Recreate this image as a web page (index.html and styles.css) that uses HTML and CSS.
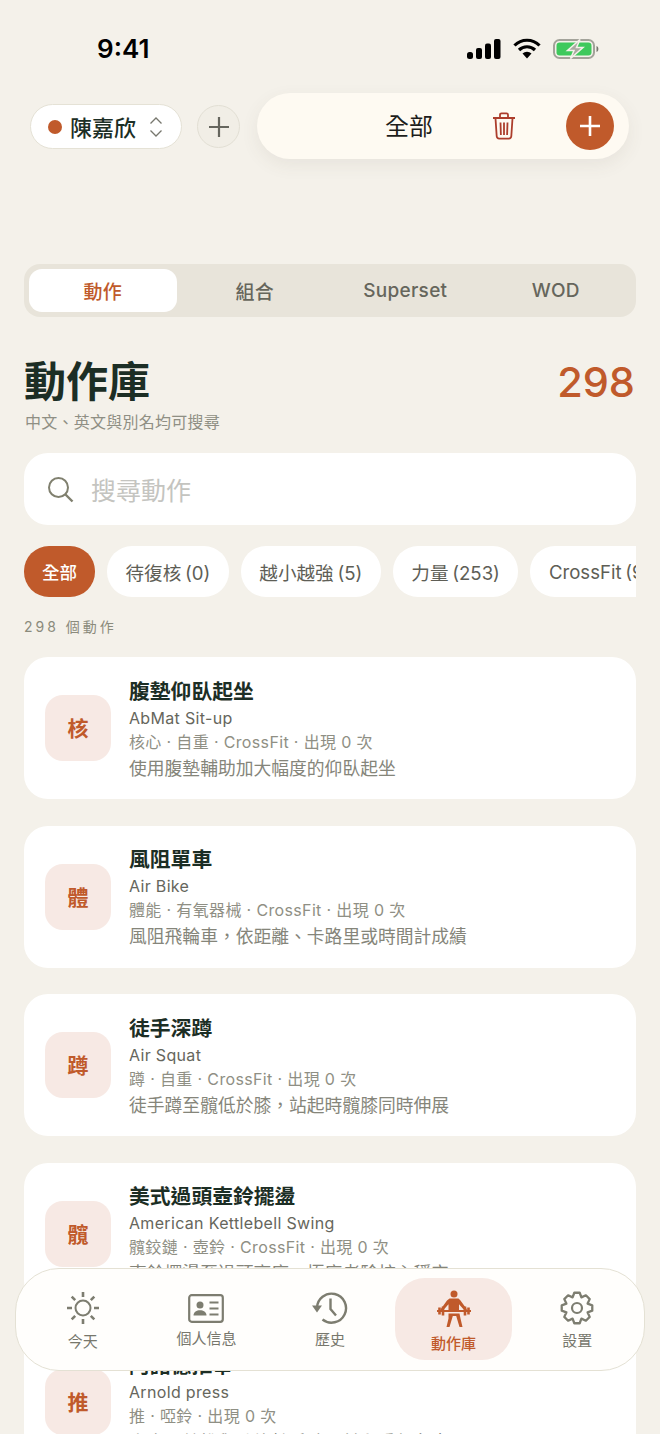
FILE: index.html
```html
<!DOCTYPE html>
<html lang="zh-Hant">
<head>
    <meta charset="UTF-8">
    <meta name="viewport" content="width=device-width, initial-scale=1.0">
    <title>動作庫</title>
    <link rel="stylesheet" href="styles.css">
</head>
<body>
    <div class="statusbar">
        <span class="time">9:41</span>
        <div class="status-icons">
            <svg width="34" height="20" viewBox="0 0 34 20"><rect x="0" y="13" width="6" height="7" rx="2.5" fill="#000"/><rect x="9" y="9" width="6" height="11" rx="2" fill="#000"/><rect x="18" y="4.500" width="6" height="15.500" rx="2" fill="#000"/><rect x="27" y="0" width="6.500" height="20" rx="2" fill="#000"/></svg>
            <svg width="28" height="21" viewBox="0 0 28 21"><path d="M1.500 7.500a17.500 17.500 0 0 1 25 0M6 12a11.500 11.500 0 0 1 16 0" fill="none" stroke="#000" stroke-width="3.200"/><path d="M9.500 15.500a6.500 6.500 0 0 1 9 0L14 20.500z" fill="#000"/></svg>
            <svg width="46" height="20" viewBox="0 0 46 20"><rect x="1" y="1" width="40" height="18" rx="5.500" fill="none" stroke="#a3a39a" stroke-width="2"/><rect x="3.500" y="3.500" width="35" height="13" rx="3.200" fill="#3ec95c"/><path d="M43.500 7c2.500.5 2.500 5.500 0 6z" fill="#77776f"/><path d="M27 .5 14.500 11.500h6.500L17.500 19.500 30 8.500h-6.500z" fill="#a9a9a1" stroke="#f4f1ea" stroke-width="1.500"/></svg>
        </div>
    </div>

    <div class="topbar">
        <div class="person">
            <span class="person-dot"></span>
            <span class="person-name">陳嘉欣</span>
            <svg width="14" height="22" viewBox="0 0 14 22"><path d="M1.500 7.500 7 2l5.500 5.500M1.500 14.500 7 20l5.500-5.500" fill="none" stroke="#77776e" stroke-width="1.300"/></svg>
        </div>
        <div class="add-person">
            <svg width="22" height="22" viewBox="0 0 22 22"><path d="M11 1v20M1 11h20" stroke="#66665e" stroke-width="2.200"/></svg>
        </div>
        <div class="action-pill">
            <span class="action-label">全部</span>
            <svg class="trash" width="24" height="28" viewBox="0 0 24 28"><path d="M1 6h22M8 5.500V2.800A1.500 1.500 0 0 1 9.500 1.300h5A1.500 1.500 0 0 1 16 2.800v2.700M3.500 6.500l1.200 17.800a2.500 2.500 0 0 0 2.500 2.300h9.600a2.500 2.500 0 0 0 2.500-2.300L20.500 6.500M8.500 10.500l.4 12.500M12 10.500V23M15.500 10.500 15.100 23" fill="none" stroke="#ac3d2c" stroke-width="1.800"/></svg>
            <div class="action-add">
                <svg width="22" height="22" viewBox="0 0 22 22"><path d="M11 1v20M1 11h20" stroke="#fff" stroke-width="2.600"/></svg>
            </div>
        </div>
    </div>

    <main class="content">
        <div class="tabs">
            <div class="tab tab-active">動作</div>
            <div class="tab">組合</div>
            <div class="tab">Superset</div>
            <div class="tab">WOD</div>
        </div>

        <div class="title-row">
            <h1>動作庫</h1>
            <span class="total">298</span>
        </div>
        <p class="subtitle">中文、英文與別名均可搜尋</p>

        <div class="search">
            <svg width="27" height="27" viewBox="0 0 27 27"><circle cx="11.500" cy="11.500" r="9.500" fill="none" stroke="#80806f" stroke-width="2"/><path d="m18.500 18.500 7 7" stroke="#80806f" stroke-width="2.400"/></svg>
            <span>搜尋動作</span>
        </div>

        <div class="chips">
            <div class="chip chip-active">全部</div>
            <div class="chip">待復核 (0)</div>
            <div class="chip">越小越強 (5)</div>
            <div class="chip">力量 (253)</div>
            <div class="chip">CrossFit (9)</div>
        </div>

        <div class="count">298 個動作</div>

        <div class="list">
            <div class="card">
                <div class="badge">核</div>
                <div class="info">
                    <div class="name">腹墊仰臥起坐</div>
                    <div class="name-en">AbMat Sit-up</div>
                    <div class="meta">核心 · 自重 · CrossFit · 出現 0 次</div>
                    <div class="desc">使用腹墊輔助加大幅度的仰臥起坐</div>
                </div>
            </div>
            <div class="card">
                <div class="badge">體</div>
                <div class="info">
                    <div class="name">風阻單車</div>
                    <div class="name-en">Air Bike</div>
                    <div class="meta">體能 · 有氧器械 · CrossFit · 出現 0 次</div>
                    <div class="desc">風阻飛輪車，依距離、卡路里或時間計成績</div>
                </div>
            </div>
            <div class="card">
                <div class="badge">蹲</div>
                <div class="info">
                    <div class="name">徒手深蹲</div>
                    <div class="name-en">Air Squat</div>
                    <div class="meta">蹲 · 自重 · CrossFit · 出現 0 次</div>
                    <div class="desc">徒手蹲至髖低於膝，站起時髖膝同時伸展</div>
                </div>
            </div>
            <div class="card">
                <div class="badge">髖</div>
                <div class="info">
                    <div class="name">美式過頭壺鈴擺盪</div>
                    <div class="name-en">American Kettlebell Swing</div>
                    <div class="meta">髖鉸鏈 · 壺鈴 · CrossFit · 出現 0 次</div>
                    <div class="desc">壺鈴擺盪至過頭高度，極度考驗核心穩定</div>
                </div>
            </div>
            <div class="card">
                <div class="badge">推</div>
                <div class="info">
                    <div class="name">阿諾德推舉</div>
                    <div class="name-en">Arnold press</div>
                    <div class="meta">推 · 啞鈴 · 出現 0 次</div>
                    <div class="desc">坐姿啞鈴推舉時旋轉手腕，兼顧肩部各束</div>
                </div>
            </div>
        </div>
    </main>

    <nav class="tabbar">
        <div class="nav-item">
            <svg width="36" height="36" viewBox="0 0 36 36"><circle cx="18" cy="18" r="7.500" fill="none" stroke="#7d7d70" stroke-width="2"/><path d="M18 2v5M18 29v5M2 18h5M29 18h5M6.700 6.700l3.500 3.500M25.800 25.800l3.500 3.500M6.700 29.300l3.500-3.500M25.800 10.200l3.500-3.500" stroke="#7d7d70" stroke-width="2.600"/></svg>
            <span>今天</span>
        </div>
        <div class="nav-item nav-item-id">
            <svg width="36" height="29" viewBox="0 0 36 29"><rect x="1.200" y="1.200" width="33.600" height="26.600" rx="2.500" fill="none" stroke="#7d7d70" stroke-width="2.200"/><circle cx="12" cy="11" r="3.500" fill="#7d7d70"/><path d="M5.500 21.500c0-7 13-7 13 0z" fill="#7d7d70"/><path d="M21.500 8.500h9M21.500 14.500h9M21.500 20.500h9" stroke="#7d7d70" stroke-width="1.800"/></svg>
            <span>個人信息</span>
        </div>
        <div class="nav-item nav-item-history">
            <svg width="36" height="34" viewBox="0 0 36 34"><path d="M5 17A14.500 14.500 0 1 1 10.500 28.500" fill="none" stroke="#7d7d70" stroke-width="2.400"/><path d="M0 14.500h10L5 21.500z" fill="#7d7d70"/><path d="M18.500 7.500V18l5.500 6.500" fill="none" stroke="#7d7d70" stroke-width="2.400"/></svg>
            <span>歷史</span>
        </div>
        <div class="nav-item nav-item-active">
            <svg width="38" height="38" viewBox="0 0 38 38"><circle cx="19" cy="4" r="3.500" fill="#c05a2b"/><path d="M14.500 8.500h9l2 2 6.500 9-2 1.500-6-6.800V20H13.500v-5.800L7.500 21l-2-1.500 6.500-9z" fill="#c05a2b"/><path d="M2 21h34" stroke="#c05a2b" stroke-width="2"/><path d="M4.500 17.500v7M8 16.500v9M30 16.500v9M33.500 17.500v7" stroke="#c05a2b" stroke-width="2.600"/><path d="M13.500 23.500h11l1 5 2 8.500h-3l-3.300-11h-3.400L14.500 37h-3l2-8.500z" fill="#c05a2b"/></svg>
            <span>動作庫</span>
        </div>
        <div class="nav-item">
            <svg width="34" height="34" viewBox="0 0 34 34"><circle cx="17" cy="17" r="5" fill="none" stroke="#7d7d70" stroke-width="2.200"/><path d="M14.310 1.740 19.690 1.740 21.400 6.380 25.890 4.300 29.700 8.110 27.620 12.600 32.260 14.310 32.260 19.690 27.620 21.400 29.700 25.890 25.890 29.700 21.400 27.620 19.690 32.260 14.310 32.260 12.600 27.620 8.110 29.700 4.300 25.890 6.380 21.400 1.740 19.690 1.740 14.310 6.380 12.600 4.300 8.110 8.110 4.300 12.600 6.380z" fill="none" stroke="#7d7d70" stroke-width="2.300" stroke-linejoin="round"/></svg>
            <span>設置</span>
        </div>
    </nav>
</body>
</html>
```

FILE: styles.css
```css
* {
    box-sizing: border-box;
}
html, body {
    height: 1434px;
    overflow: hidden;
}
body {
    margin: 0;
    background-color: #f4f1ea;
    font-family: Inter, "Noto Sans CJK TC", sans-serif;
    color: #1c2e25;
    position: relative;
}

/* status bar */
.statusbar {
    height: 93px;
    padding: 30px 61px 0 97px;
    display: flex;
    justify-content: space-between;
    align-items: flex-start;
}
.time {
    font-size: 26px;
    font-weight: 600;
    line-height: 38px;
    color: #000;
}
.status-icons {
    display: flex;
    align-items: center;
    gap: 12px;
    padding-top: 8px;
}

/* top row */
.topbar {
    height: 66px;
    padding: 0 31px 0 30px;
    display: flex;
    align-items: center;
}
.person {
    flex: none;
    width: 152px;
    height: 45px;
    margin-top: 1px;
    padding: 0 12px 0 17px;
    display: flex;
    align-items: center;
    background-color: #fff;
    border: 1px solid #e5e2d6;
    border-radius: 23px;
}
.person-dot {
    width: 14px;
    height: 14px;
    border-radius: 50%;
    background-color: #c05a2b;
    margin-right: 8px;
}
.person-name {
    font-size: 22px;
    font-weight: 500;
    margin-right: 13px;
    padding-bottom: 2px;
}
.add-person {
    flex: none;
    width: 43px;
    height: 43px;
    margin: 1px 17px 0 15px;
    display: flex;
    align-items: center;
    justify-content: center;
    background-color: #f1eee6;
    border: 1px solid #e2dfd4;
    border-radius: 50%;
}
.action-pill {
    flex: none;
    width: 372px;
    height: 66px;
    padding: 0 15px 0 128px;
    display: flex;
    align-items: center;
    background-color: #fefaf2;
    border-radius: 33px;
    box-shadow: 0 6px 18px rgba(90, 80, 60, 0.08);
}
.action-label {
    flex: none;
    font-size: 24px;
    color: #1d1d1b;
    margin-right: 59px;
    padding-bottom: 3px;
    white-space: nowrap;
}
.trash {
    flex: none;
}
.action-add {
    flex: none;
    width: 48px;
    height: 48px;
    margin-left: 50px;
    display: flex;
    align-items: center;
    justify-content: center;
    background-color: #c05a2b;
    border-radius: 50%;
}

/* main column */
.content {
    padding: 105px 24px 0;
}
.tabs {
    height: 53px;
    padding: 5px;
    display: grid;
    grid-template-columns: repeat(4, 1fr);
    background-color: #e8e4da;
    border-radius: 16px;
}
.tab {
    display: flex;
    align-items: center;
    justify-content: center;
    font-size: 19px;
    font-weight: 500;
    letter-spacing: 0.3px;
    color: #66665c;
}
.tab-active {
    background-color: #fff;
    color: #c05a2b;
    border-radius: 13px;
    margin-right: 3px;
}
.title-row {
    display: flex;
    justify-content: space-between;
    align-items: center;
    margin-top: 36px;
    height: 58px;
}
h1 {
    margin: 0;
    font-size: 42px;
    line-height: 60px;
    font-weight: 700;
}
.total {
    font-size: 41.500px;
    font-weight: 500;
    color: #c05a2b;
    margin-right: 1px;
}
.subtitle {
    margin: 0;
    font-size: 16px;
    line-height: 22px;
    letter-spacing: 0.25px;
    color: #8f8f84;
    padding-left: 1px;
}
.search {
    height: 72px;
    margin-top: 20px;
    padding: 0 23px;
    display: flex;
    align-items: center;
    gap: 17px;
    background-color: #fff;
    border-radius: 24px;
}
.search span {
    font-size: 25px;
    color: #c4c4c0;
}
.chips {
    margin-top: 21px;
    height: 51px;
    display: flex;
    gap: 12px;
    overflow: hidden;
}
.chip {
    flex: none;
    height: 51px;
    padding: 0 18.500px;
    display: flex;
    align-items: center;
    background-color: #fff;
    border-radius: 25px;
    font-size: 18.600px;
    word-spacing: -1.500px;
    color: #5e5e56;
    white-space: nowrap;
}
.chip-active {
    padding: 0 18px;
    background-color: #c05a2b;
    color: #fff;
    font-size: 17.500px;
    font-weight: 500;
}
.count {
    margin-top: 20px;
    height: 20px;
    line-height: 20px;
    font-size: 14px;
    letter-spacing: 3px;
    color: #8b8b7c;
}

/* cards */
.list {
    margin-top: 20px;
    display: flex;
    flex-direction: column;
    gap: 26.500px;
}
.card {
    height: 142px;
    padding: 0 21px;
    display: flex;
    align-items: center;
    gap: 18px;
    background-color: #fff;
    border-radius: 24px;
}
.badge {
    flex: none;
    width: 66px;
    height: 66px;
    padding-bottom: 2px;
    display: flex;
    align-items: center;
    justify-content: center;
    background-color: #f7e9e4;
    border-radius: 18px;
    font-size: 21px;
    font-weight: 700;
    color: #c05a2b;
}
.info {
    padding-top: 5px;
}
.name {
    font-size: 20.800px;
    line-height: 26px;
    font-weight: 700;
}
.name-en {
    font-size: 16px;
    line-height: 26px;
    letter-spacing: 0.33px;
    color: #66665c;
}
.meta {
    font-size: 16px;
    line-height: 23px;
    letter-spacing: 0.35px;
    color: #8f8f84;
}
.desc {
    font-size: 17.800px;
    line-height: 29px;
    color: #85857a;
}

/* bottom tab bar */
.tabbar {
    position: absolute;
    left: 15px;
    top: 1268px;
    width: 630px;
    height: 103px;
    padding: 9px 5px 10px;
    display: grid;
    grid-template-columns: repeat(5, 1fr);
    background-color: #fffefc;
    border: 1px solid #e4e1d4;
    border-radius: 44px;
}
.nav-item {
    display: flex;
    flex-direction: column;
    align-items: center;
    justify-content: center;
    gap: 4px;
    padding-top: 3px;
    font-size: 15px;
    color: #77776c;
}
.nav-item-id {
    padding-top: 4px;
}
.nav-item-history {
    gap: 3px;
    padding-top: 2px;
}
.nav-item-active {
    margin: 0 3px;
    padding-top: 4px;
    background-color: #f7e9e4;
    border-radius: 30px;
    color: #c05a2b;
    font-weight: 500;
}
```
